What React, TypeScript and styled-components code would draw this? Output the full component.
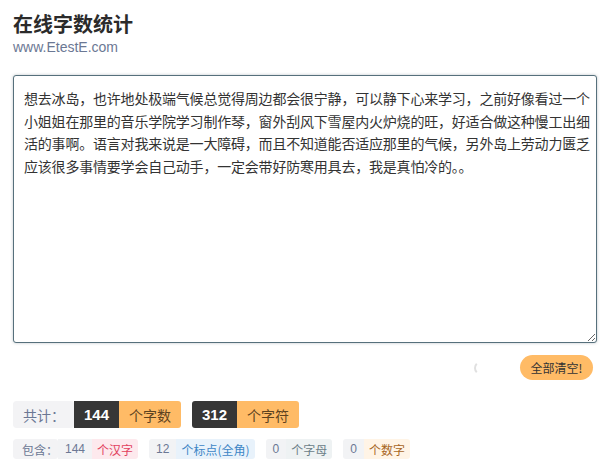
import styled, { createGlobalStyle } from 'styled-components';

const GlobalStyle = createGlobalStyle`
    body {
        margin: 0;
        background: #ffffff;
        font-family: "Liberation Sans", "Noto Sans CJK SC", sans-serif;
        color: #333333;
    }
`;

const Page = styled.div`
    width: 584px;
    padding: 10px 3px 0 13px;
    display: flex;
    flex-direction: column;
`;

const Title = styled.h1`
    margin: 0;
    font-size: 20px;
    line-height: 27px;
    font-weight: bold;
    color: #2b2b2b;
    font-family: "Noto Sans CJK SC", sans-serif;
`;

const Site = styled.div`
    font-size: 14px;
    line-height: 20px;
    color: #6b7894;
`;

const TextBox = styled.textarea`
    box-sizing: border-box;
    margin-top: 18px;
    width: 584px;
    height: 268px;
    padding: 11px 4px 11px 10px;
    border: 1.5px solid #56707c;
    border-radius: 3px;
    box-shadow: 0 0 3px rgba(60, 80, 90, 0.35);
    outline: none;
    font-family: "Noto Sans CJK SC", sans-serif;
    font-size: 14px;
    letter-spacing: -0.2px;
    line-height: 22.6px;
    color: #333333;
    resize: both;
`;

const Actions = styled.div`
    margin-top: 12px;
    display: flex;
    justify-content: flex-end;
    align-items: center;
    gap: 32px;
    padding-right: 4px;
`;

const Spinner = styled.span`
    width: 10px;
    height: 10px;
    border-radius: 50%;
    border: 2px solid transparent;
    border-left-color: #e0e0e0;
`;

const ClearButton = styled.button`
    width: 73px;
    height: 25px;
    border: none;
    border-radius: 13px;
    background: #ffbb66;
    color: #333333;
    font-family: "Noto Sans CJK SC", sans-serif;
    font-size: 12px;
    padding: 0;
`;

const Row = styled.div<{ $top: number; $h: number }>`
    margin-top: ${(p) => p.$top}px;
    display: flex;
    align-items: stretch;
    height: ${(p) => p.$h}px;
    gap: 11px;
`;

const Group = styled.div`
    display: flex;
    border-radius: 3px;
    overflow: hidden;
`;

const Label = styled.span<{ $size: number; $pad: string }>`
    display: flex;
    align-items: center;
    padding: ${(p) => p.$pad};
    background: #f3f3f5;
    color: #6b7894;
    font-size: ${(p) => p.$size}px;
    font-family: "Noto Sans CJK SC", sans-serif;
    border-radius: 3px;
`;

const BigNum = styled.span`
    display: flex;
    align-items: center;
    padding: 0 10px;
    background: #363636;
    color: #ffffff;
    font-size: 15px;
    font-weight: bold;
`;

const BigUnit = styled.span`
    display: flex;
    align-items: center;
    padding: 0 10px;
    background: #ffbb66;
    color: #5e4320;
    font-size: 14px;
    font-family: "Noto Sans CJK SC", sans-serif;
`;

const SmallNum = styled.span`
    display: flex;
    align-items: center;
    padding: 0 7px;
    background: #f2f3f5;
    color: #6b7894;
    font-size: 12px;
`;

const tones = {
    pink: { bg: '#fde9ed', fg: '#e2415e' },
    blue: { bg: '#e8f2fb', fg: '#3d86c6' },
    grey: { bg: '#eef2f3', fg: '#6b8088' },
    orange: { bg: '#fff4e6', fg: '#a8661f' },
};

const SmallUnit = styled.span<{ $tone: keyof typeof tones }>`
    display: flex;
    align-items: center;
    padding: 0 5px;
    background: ${(p) => tones[p.$tone].bg};
    color: ${(p) => tones[p.$tone].fg};
    font-size: 12px;
    font-family: "Noto Sans CJK SC", sans-serif;
`;

const sample =
    '想去冰岛，也许地处极端气候总觉得周边都会很宁静，可以静下心来学习，之前好像看过一个小姐姐在那里的音乐学院学习制作琴，窗外刮风下雪屋内火炉烧的旺，好适合做这种慢工出细活的事啊。语言对我来说是一大障碍，而且不知道能否适应那里的气候，另外岛上劳动力匮乏应该很多事情要学会自己动手，一定会带好防寒用具去，我是真怕冷的。。';

export default function App() {
    return (
        <>
            <GlobalStyle />
            <Page>
                <Title>在线字数统计</Title>
                <Site>www.EtestE.com</Site>
                <TextBox defaultValue={sample} />
                <Actions>
                    <Spinner />
                    <ClearButton>全部清空!</ClearButton>
                </Actions>
                <Row $top={21} $h={27}>
                    <Group>
                        <Label $size={14} $pad="0 9px 0 10px">共计：</Label>
                        <BigNum>144</BigNum>
                        <BigUnit>个字数</BigUnit>
                    </Group>
                    <Group>
                        <BigNum>312</BigNum>
                        <BigUnit>个字符</BigUnit>
                    </Group>
                </Row>
                <Row $top={11} $h={20}>
                    <Group>
                        <Label $size={12} $pad="0 0 0 9px">包含：</Label>
                        <SmallNum>144</SmallNum>
                        <SmallUnit $tone="pink">个汉字</SmallUnit>
                    </Group>
                    <Group>
                        <SmallNum>12</SmallNum>
                        <SmallUnit $tone="blue">个标点(全角)</SmallUnit>
                    </Group>
                    <Group>
                        <SmallNum>0</SmallNum>
                        <SmallUnit $tone="grey">个字母</SmallUnit>
                    </Group>
                    <Group>
                        <SmallNum>0</SmallNum>
                        <SmallUnit $tone="orange">个数字</SmallUnit>
                    </Group>
                </Row>
            </Page>
        </>
    );
}
